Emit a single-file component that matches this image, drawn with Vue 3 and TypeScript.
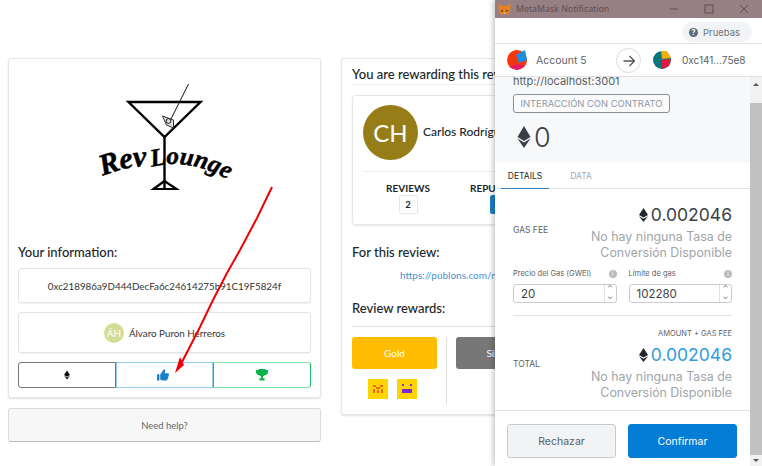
<template>
  <div class="page">
    <!-- left column -->
    <div class="left">
      <section class="card info-card">
        <div class="logo">
          <svg width="160" height="120" viewBox="-5.5 0 160 120" class="logo-svg">
            <path d="M38 22 H110 L74 57 Z" fill="none" stroke="#000" stroke-width="2.4" />
            <path d="M74 57 V108" stroke="#000" stroke-width="2.4" />
            <path d="M74 101 L63 109 H86 Z" fill="none" stroke="#000" stroke-width="2.2" />
            <path d="M98 4 L78 44" stroke="#111" stroke-width="1" />
            <path d="M72 36 L83 40 L83 48 L76 45 Z" fill="#ddd" stroke="#333" stroke-width="1" />
            <circle cx="78" cy="41" r="2.4" fill="none" stroke="#222" stroke-width="1" />
            <defs>
              <path id="curve-a" d="M12 96 Q36 86 60 86" />
              <path id="curve-b" d="M61 87 Q102 76 148 106" />
            </defs>
            <text class="script big" textLength="46"><textPath href="#curve-a">Rev</textPath></text>
            <text class="script"><textPath href="#curve-b">Lounge</textPath></text>
          </svg>
        </div>
        <h3 class="label">Your information:</h3>
        <div class="box addr">0xc218986a9D444DecFa6c24614275b91C19F5824f</div>
        <div class="box person">
          <span class="mini-avatar">ÁH</span>
          <span>Álvaro Puron Herreros</span>
        </div>
        <div class="segments">
          <div class="seg seg-eth">
            <svg width="6" height="10" viewBox="0 0 8 12"><path d="M4 0 L8 6 L4 8.4 L0 6 Z M0 7 L4 9.4 L8 7 L4 12 Z" fill="#111" /></svg>
          </div>
          <div class="seg seg-like">
            <svg width="12" height="12" viewBox="0 0 12 12" class="like-icon">
              <path d="M0 5.2 H2.4 V11.6 H0 Z M3.2 5.4 L6 1.6 C6.2 .6 6.8 0 7.4 .2 C8.4 .6 8.2 2.6 7.6 4.2 H11 C12 4.2 12.2 5.4 11.6 6 C12 6.6 11.8 7.4 11.2 7.8 C11.4 8.6 11 9.2 10.6 9.4 C10.8 10.4 10.2 11.4 9.2 11.4 H5.4 L3.2 10.6 Z" fill="#1a7fc9" />
            </svg>
          </div>
          <div class="seg seg-cup">
            <svg width="12" height="12" viewBox="0 0 12 12">
              <path d="M2.6 0 H9.4 V1 H12 V3 C12 5 10.4 6 8.8 6.3 C8.2 7 7.4 7.4 6.9 7.5 V9.2 H8.6 V11.6 H3.4 V9.2 H5.1 V7.5 C4.6 7.4 3.8 7 3.2 6.3 C1.6 6 0 5 0 3 V1 H2.6 Z" fill="#0cb14b" />
            </svg>
          </div>
        </div>
      </section>
      <div class="help">Need help?</div>
    </div>

    <!-- review card, runs under the metamask window -->
    <section class="card review-card">
      <h3 class="label title">You are rewarding this review</h3>
      <div class="author">
        <div class="author-top">
          <span class="avatar">CH</span>
          <span class="author-name">Carlos Rodríguez</span>
        </div>
        <div class="stats">
          <div class="stat">
            <strong>REVIEWS</strong>
            <span class="stat-box">2</span>
          </div>
          <div class="stat">
            <strong>REPUTATION</strong>
            <span class="stat-box blue"></span>
          </div>
        </div>
      </div>
      <h3 class="label">For this review:</h3>
      <div class="link">https://publons.com/review/</div>
      <h3 class="label rewards-label">Review rewards:</h3>
      <div class="rewards">
        <div class="reward">
          <div class="reward-btn gold">Gold</div>
          <div class="tokens">
            <svg width="20" height="20" viewBox="0 0 20 20">
              <rect width="20" height="20" fill="#ffd400" />
              <path d="M5 6h3v2H5zM12 6h3v2h-3zM8 8h4v2H8zM5 10h2v4H5zM13 10h2v4h-2zM9 11h2v3H9z" fill="#f26a1b" />
            </svg>
            <svg width="20" height="20" viewBox="0 0 20 20">
              <rect width="20" height="20" fill="#ffd400" />
              <path d="M5 5h2v2H5zM13 5h2v2h-2z" fill="#7a3fc0" />
              <path d="M5 10h10v4H5z" fill="#7a2bd0" />
            </svg>
          </div>
        </div>
        <div class="reward-sep"></div>
        <div class="reward">
          <div class="reward-btn silver">Silver</div>
        </div>
      </div>
    </section>

    <!-- metamask popup -->
    <aside class="mm">
      <div class="mm-title">
        <svg width="13" height="13" viewBox="0 0 13 13" class="fox">
          <path d="M0 1 L5 3 H8 L13 1 L12 7 L10 12 L7.5 11 H5.5 L3 12 L1 7 Z" fill="#e8821e" />
          <path d="M3 7 L5.4 7.6 L4 9 Z M10 7 L7.6 7.6 L9 9 Z" fill="#3a2a20" />
          <path d="M5.5 11 L6.5 9.5 L7.5 11 Z" fill="#e4d8cf" />
        </svg>
        <span class="mm-title-text">MetaMask Notification</span>
        <div class="win-btns">
          <svg width="10" height="10" viewBox="0 0 10 10"><path d="M1 5 H9" stroke="#5d5053" /></svg>
          <svg width="10" height="10" viewBox="0 0 10 10"><rect x="1" y="1" width="8" height="8" fill="none" stroke="#5d5053" /></svg>
          <svg width="10" height="10" viewBox="0 0 10 10"><path d="M1 1 L9 9 M9 1 L1 9" stroke="#5d5053" /></svg>
        </div>
      </div>
      <div class="mm-top">
        <div class="network">
          <span class="net-help">?</span>
          <span>Pruebas</span>
        </div>
      </div>
      <div class="accounts">
        <div class="acct">
          <svg width="20" height="20" viewBox="0 0 20 20" class="ident">
            <circle cx="10" cy="10" r="10" fill="#f5350a" />
            <path d="M9 5 L18 0 L20 10 L12 13 Z" fill="#1e8fe0" />
            <path d="M2 17 L12 14 L18 16 L10 20 Z" fill="#e6186c" />
          </svg>
          <span>Account 5</span>
        </div>
        <span class="arrow-btn">
          <svg width="14" height="14" viewBox="0 0 14 14"><path d="M1.5 7 H12 M7.5 2 L12.5 7 L7.5 12" fill="none" stroke="#555" stroke-width="1.3" /></svg>
        </span>
        <div class="acct acct-to">
          <svg width="18" height="18" viewBox="0 0 18 18" class="ident">
            <circle cx="9" cy="9" r="9" fill="#03757d" />
            <path d="M8 0 H14 L18 7 L9 8 Z" fill="#f4ae05" />
            <path d="M8 9 L18 8 L16 15 L9 18 Z" fill="#e8163f" />
          </svg>
          <span>0xc141...75e8</span>
        </div>
      </div>
      <div class="mm-body">
        <div class="mm-scroll">
          <div class="summary">
            <div class="origin">http://localhost:3001</div>
            <div class="tag">INTERACCIÓN CON CONTRATO</div>
            <div class="zero">
              <svg width="14" height="22" viewBox="0 0 14 22"><path d="M7 0 L13.5 11 L7 15 L.5 11 Z M.5 12.5 L7 16.5 L13.5 12.5 L7 22 Z" fill="#3b3f45" /></svg>
              <span>0</span>
            </div>
          </div>
          <div class="tabs">
            <span class="tab active">DETAILS</span>
            <span class="tab">DATA</span>
          </div>
          <div class="details">
            <div class="row">
              <span class="row-label">GAS FEE</span>
              <div class="amount">
                <div class="eth">
                  <svg width="9" height="14" viewBox="0 0 9 14"><path d="M4.5 0 L9 7 L4.5 9.6 L0 7 Z M0 8.2 L4.5 10.8 L9 8.2 L4.5 14 Z" fill="#24272a" /></svg>
                  <span>0.002046</span>
                </div>
                <div class="rate">No hay ninguna Tasa de<br />Conversión Disponible</div>
              </div>
            </div>
            <div class="gas">
              <div class="gas-col">
                <div class="gas-head"><span>Precio del Gas (GWEI)</span><i class="info">i</i></div>
                <div class="spin"><span class="spin-val">20</span><span class="spin-btns">⌃<br />⌄</span></div>
              </div>
              <div class="gas-col">
                <div class="gas-head"><span>Límite de gas</span><i class="info">i</i></div>
                <div class="spin"><span class="spin-val">102280</span><span class="spin-btns">⌃<br />⌄</span></div>
              </div>
            </div>
            <div class="total-note">AMOUNT + GAS FEE</div>
            <div class="row total">
              <span class="row-label">TOTAL</span>
              <div class="amount">
                <div class="eth blue-text">
                  <svg width="9" height="14" viewBox="0 0 9 14"><path d="M4.5 0 L9 7 L4.5 9.6 L0 7 Z M0 8.2 L4.5 10.8 L9 8.2 L4.5 14 Z" fill="#24272a" /></svg>
                  <span>0.002046</span>
                </div>
                <div class="rate">No hay ninguna Tasa de<br />Conversión Disponible</div>
              </div>
            </div>
          </div>
          <div class="actions">
            <button type="button" class="btn reject">Rechazar</button>
            <button type="button" class="btn confirm">Confirmar</button>
          </div>
        </div>
        <div class="scrollbar">
          <span class="sb-up"></span>
          <span class="sb-thumb"></span>
          <span class="sb-down"></span>
        </div>
      </div>
    </aside>

    <!-- red annotation arrow drawn over the screenshot -->
    <svg class="annotation" width="762" height="466" viewBox="0 0 762 466">
      <path d="M272 187 L257 218 L240 250 L227 273 L213 300 L200 327 L182 362" fill="none" stroke="#f00000" stroke-width="2" />
      <path d="M175 373 L180 357 L184 365 Z" fill="#f00000" />
    </svg>
  </div>
</template>

<script setup lang="ts">
// static mock, nothing to wire up
</script>

<style>
html,
body {
  margin: 0;
  background: #fff;
}
</style>

<style scoped>
.page {
  position: relative;
  width: 762px;
  height: 466px;
  overflow: hidden;
  background: #fff;
  display: flex;
  align-items: flex-start;
  gap: 20px;
  padding: 58px 0 0 8px;
  box-sizing: border-box;
  font-family: Lato, 'Liberation Sans', sans-serif;
  color: #212529;
}

.left {
  width: 313px;
  flex: none;
  display: flex;
  flex-direction: column;
  gap: 10px;
}

.card {
  background: #fff;
  border: 1px solid #e6e6e6;
  border-radius: 3px;
  box-shadow: 0 1px 2px rgba(0, 0, 0, 0.12);
  box-sizing: border-box;
}

.info-card {
  height: 340px;
  padding: 0 9px;
}

.logo {
  height: 184px;
  display: flex;
  justify-content: center;
  padding-top: 21px;
  box-sizing: border-box;
}

.logo-svg {
  display: block;
}

.script {
  font-family: 'Liberation Serif', serif;
  font-style: italic;
  font-weight: 700;
  font-size: 25px;
  fill: #000;
  stroke: #000;
  stroke-width: 0.5px;
}

.script.big {
  font-size: 30px;
}

.label {
  margin: 0;
  font-size: 13px;
  line-height: 18px;
  font-weight: 500;
  color: #212529;
}

.box {
  border: 1px solid #e4e4e4;
  border-radius: 3px;
  display: flex;
  align-items: center;
  justify-content: center;
  font-size: 9.8px;
  color: #333;
  box-shadow: 0 1px 1px rgba(0, 0, 0, 0.05);
  box-sizing: border-box;
}

.addr {
  height: 35px;
  margin-top: 7px;
}

.person {
  height: 41px;
  margin-top: 9px;
  gap: 5px;
}

.mini-avatar {
  width: 20px;
  height: 20px;
  border-radius: 50%;
  background: #d4dc94;
  color: #fff;
  font-size: 10px;
  display: flex;
  align-items: center;
  justify-content: center;
}

.segments {
  display: flex;
  height: 26px;
  margin-top: 9px;
}

.seg {
  flex: 1;
  display: flex;
  align-items: center;
  justify-content: center;
  border: 1px solid;
  box-sizing: border-box;
}

.seg-eth {
  border-color: #777;
  border-radius: 3px 0 0 3px;
}

.seg-like {
  border-color: #94cdf1;
}

.like-icon {
  margin-right: 3px;
}

.seg-cup {
  border-color: #7ee2a8;
  border-right-color: #17bf63;
  border-left-color: #17bf63;
  border-radius: 0 3px 3px 0;
}

.help {
  height: 34px;
  background: #f7f7f7;
  border: 1px solid #dcdcdc;
  border-bottom-color: #bbb;
  border-radius: 3px;
  display: flex;
  align-items: center;
  justify-content: center;
  font-size: 9.5px;
  color: #666;
  box-sizing: border-box;
}

.review-card {
  width: 400px;
  height: 357px;
  flex: none;
  padding: 6px 10px 0;
}

.title {
  height: 17px;
  border-bottom: 1px solid #eee;
  padding-bottom: 2px;
  white-space: nowrap;
  box-sizing: content-box;
}

.author {
  height: 130px;
  margin: 10px 0 18px;
  border: 1px solid #e6e6e6;
  border-radius: 3px;
  box-shadow: 0 1px 2px rgba(0, 0, 0, 0.1);
  padding: 9px 10px 0;
  box-sizing: border-box;
}

.author-top {
  display: flex;
  align-items: center;
  gap: 5px;
  height: 67px;
  padding-bottom: 11px;
  border-bottom: 1px solid #eee;
  box-sizing: border-box;
}

.avatar {
  width: 55px;
  height: 55px;
  border-radius: 50%;
  background: #967d17;
  color: #fff;
  font-size: 24px;
  display: flex;
  align-items: center;
  justify-content: center;
}

.author-name {
  font-size: 12px;
  font-weight: 500;
  margin-bottom: 3px;
}

.stats {
  display: flex;
  gap: 39px;
  padding: 10px 0 0 18px;
}

.stat {
  display: flex;
  flex-direction: column;
  align-items: center;
  gap: 1px;
  width: 54px;
}

.stat strong {
  font-size: 10px;
  line-height: 12px;
  font-weight: 700;
  white-space: nowrap;
}

.stat-box {
  width: 19px;
  height: 19px;
  border: 1px solid #e6e6e6;
  border-radius: 2px;
  font-size: 9.5px;
  font-weight: 700;
  display: flex;
  align-items: center;
  justify-content: center;
  box-sizing: border-box;
}

.stat-box.blue {
  width: 22px;
  background: #1a7fc9;
  border-color: #1a7fc9;
}

.link {
  margin: 6px 0 0 48px;
  height: 16px;
  line-height: 16px;
  font-size: 10px;
  color: #4a90d0;
  white-space: nowrap;
}

.rewards-label {
  margin-top: 16px;
  padding-bottom: 9px;
  border-bottom: 1px solid #ddd;
  box-sizing: content-box;
}

.rewards {
  display: flex;
  margin-top: 10px;
  gap: 9px;
}

.reward {
  width: 85px;
}

.reward-btn {
  height: 32px;
  border-radius: 3px;
  display: flex;
  align-items: center;
  justify-content: center;
  font-size: 10px;
  color: #fff;
}

.reward-btn.gold {
  background: #ffbc00;
}

.reward-btn.silver {
  background: #777;
}

.tokens {
  display: flex;
  justify-content: center;
  gap: 9px;
  margin-top: 10px;
  padding-right: 4px;
}

.reward-sep {
  width: 1px;
  height: 67px;
  background: #ddd;
}

.mm {
  position: absolute;
  left: 495px;
  top: 0;
  width: 267px;
  height: 466px;
  background: #fff;
  box-shadow: -2px 0 5px rgba(0, 0, 0, 0.22);
  display: flex;
  flex-direction: column;
  font-family: Inter, 'Noto Sans', sans-serif;
  color: #24272a;
}

.mm-title {
  height: 18px;
  flex: none;
  background: #968083;
  display: flex;
  align-items: center;
  padding: 0 13px 0 3px;
  font-family: 'Noto Sans', sans-serif;
  font-size: 8.8px;
  color: #5d5053;
  box-sizing: border-box;
}

.fox {
  flex: none;
}

.mm-title-text {
  margin-left: 5px;
}

.win-btns {
  margin-left: auto;
  display: flex;
  gap: 25px;
}

.mm-top {
  height: 26px;
  flex: none;
  display: flex;
  justify-content: flex-end;
  align-items: center;
  padding: 0 10px 0 0;
  box-sizing: border-box;
  border-bottom: 1px solid #e0e3e6;
}

.network {
  width: 70px;
  height: 20px;
  margin-top: 3px;
  border-radius: 10px;
  background: #f2f3f4;
  display: flex;
  align-items: center;
  gap: 5px;
  padding-left: 7px;
  font-size: 9.5px;
  color: #6a737d;
  box-sizing: border-box;
}

.net-help {
  width: 9px;
  height: 9px;
  border-radius: 50%;
  background: #5b6b7a;
  color: #fff;
  font-size: 7px;
  font-weight: 700;
  display: flex;
  align-items: center;
  justify-content: center;
}

.accounts {
  height: 33px;
  flex: none;
  position: relative;
  display: flex;
  align-items: center;
  padding-left: 12px;
  font-size: 10.5px;
  color: #5a5f64;
  border-bottom: 1px solid #e0e3e6;
  box-sizing: border-box;
}

.acct {
  display: flex;
  align-items: center;
  gap: 9px;
  width: 110px;
}

.acct-to {
  gap: 11px;
  margin-left: 36px;
  width: auto;
  font-size: 10px;
}

.ident {
  flex: none;
}

.arrow-btn {
  position: absolute;
  left: 121px;
  top: 4px;
  width: 25px;
  height: 25px;
  border: 1px solid #d8dce0;
  border-radius: 50%;
  background: #fff;
  display: flex;
  align-items: center;
  justify-content: center;
  box-sizing: border-box;
}

.mm-body {
  flex: 1;
  min-height: 0;
  display: flex;
}

.mm-scroll {
  width: 255px;
  flex: none;
  display: flex;
  flex-direction: column;
}

.summary {
  height: 86px;
  flex: none;
  background: #f7f8f9;
  padding: 0 18px;
  box-sizing: border-box;
  overflow: hidden;
}

.origin {
  font-size: 11px;
  line-height: 12px;
  margin-top: -2px;
  color: #5a5f64;
  white-space: nowrap;
}

.tag {
  width: 157px;
  height: 19px;
  margin-top: 7px;
  border: 1px solid #8a8f96;
  border-radius: 3px;
  display: flex;
  align-items: center;
  justify-content: center;
  font-size: 9.4px;
  color: #8b9aa8;
  white-space: nowrap;
  box-sizing: border-box;
  background: #fbfbfc;
}

.zero {
  display: flex;
  align-items: center;
  gap: 3px;
  height: 30px;
  margin: 9px 0 0 4px;
  font-size: 27px;
  font-weight: 300;
  color: #3b3f45;
}

.tabs {
  height: 26px;
  flex: none;
  display: flex;
  padding-left: 6px;
  gap: 8px;
  border-bottom: 1px solid #e0e3e6;
  box-sizing: border-box;
}

.tab {
  width: 48px;
  display: flex;
  align-items: center;
  justify-content: center;
  font-size: 8.5px;
  color: #a5abb0;
  height: 26px;
  box-sizing: border-box;
}

.tab.active {
  color: #24272a;
  border-bottom: 1px solid #2f80c2;
}

.details {
  flex: 1;
  min-height: 0;
  padding: 0 18px;
}

.row {
  display: flex;
  justify-content: space-between;
  align-items: center;
  padding-top: 14px;
}

.row-label {
  font-size: 8.5px;
  color: #5a5f64;
  white-space: nowrap;
  margin-bottom: 4px;
}

.total .row-label {
  margin-bottom: 16px;
}

.amount {
  text-align: right;
}

.eth {
  display: flex;
  align-items: center;
  justify-content: flex-end;
  gap: 3px;
  font-size: 17.5px;
  line-height: 24px;
  font-weight: 400;
  color: #3b3f45;
}

.blue-text {
  color: #2f9ae0;
}

.rate {
  margin-top: 2px;
  font-size: 12.4px;
  line-height: 15.5px;
  color: #a0a5aa;
  white-space: nowrap;
}

.gas {
  display: flex;
  gap: 12px;
  margin-top: 8px;
  padding-bottom: 12px;
  border-bottom: 1px solid #e0e3e6;
}

.gas-col {
  flex: 1;
  min-width: 0;
}

.gas-head {
  display: flex;
  justify-content: space-between;
  align-items: center;
  font-size: 7.5px;
  line-height: 12px;
  color: #5a5f64;
  white-space: nowrap;
}

.info {
  width: 8px;
  height: 8px;
  border-radius: 50%;
  background: #b8bcc0;
  color: #fff;
  font-size: 6px;
  font-style: normal;
  display: flex;
  align-items: center;
  justify-content: center;
}

.spin {
  height: 19px;
  margin-top: 4px;
  border: 1px solid #c8ccd0;
  border-radius: 3px;
  display: flex;
  align-items: center;
  justify-content: space-between;
  font-size: 11.5px;
  padding-left: 7px;
  color: #3b3f45;
  box-sizing: border-box;
}

.spin-btns {
  width: 11px;
  border-left: 1px solid #e0e3e6;
  height: 100%;
  font-size: 7px;
  line-height: 8px;
  text-align: center;
  color: #666;
  flex: none;
}

.total-note {
  margin-top: 13px;
  text-align: right;
  font-size: 7.5px;
  line-height: 10px;
  color: #5a5f64;
  white-space: nowrap;
}

.total {
  padding-top: 4px;
}

.actions {
  height: 56px;
  flex: none;
  display: flex;
  gap: 12px;
  padding: 13px 13px 0 12px;
  border-top: 1px solid #e0e3e6;
  box-sizing: border-box;
}

.btn {
  flex: 1;
  height: 34px;
  border-radius: 3px;
  font-family: Inter, 'Noto Sans', sans-serif;
  font-size: 10.5px;
  padding: 0;
}

.reject {
  background: #f2f3f4;
  border: 1px solid #c8ccd0;
  color: #5a5f64;
}

.confirm {
  background: #037dd6;
  border: 1px solid #037dd6;
  color: #fff;
}

.scrollbar {
  width: 12px;
  flex: none;
  background: #f1f1f1;
  display: flex;
  flex-direction: column;
  align-items: center;
}

.sb-up,
.sb-down {
  height: 26px;
  flex: none;
  width: 12px;
  position: relative;
}

.sb-up::after,
.sb-down::after {
  content: '';
  position: absolute;
  left: 3px;
  border-left: 3px solid transparent;
  border-right: 3px solid transparent;
}

.sb-up::after {
  top: 6px;
  border-bottom: 3px solid #555;
}

.sb-down {
  height: 11px;
}

.sb-down::after {
  top: 4px;
  border-top: 3px solid #555;
}

.sb-thumb {
  flex: 1;
  width: 12px;
  background: #c1c1c1;
}

.annotation {
  position: absolute;
  left: 0;
  top: 0;
  pointer-events: none;
}
</style>
